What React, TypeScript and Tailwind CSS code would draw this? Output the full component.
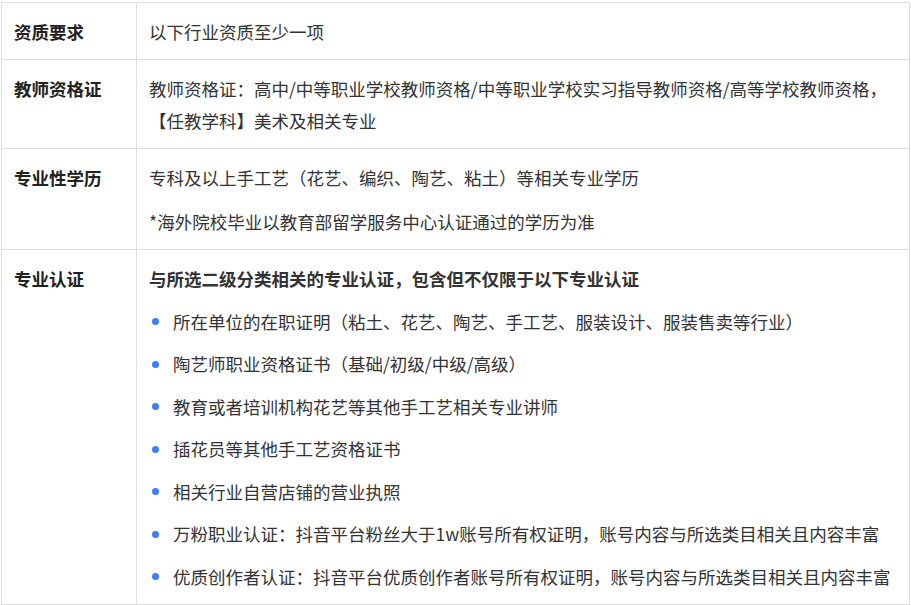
import React from "react";

interface Row {
  label: string;
  content: React.ReactNode;
}

const Dot: React.FC<{ children: React.ReactNode }> = ({ children }) => (
  <div className="flex items-center">
    <span className="w-[24px] shrink-0 pl-[3px] flex items-center">
      <span className="block w-[7px] h-[7px] rounded-full bg-[#3d7eff]" />
    </span>
    <span>{children}</span>
  </div>
);

const rows: Row[] = [
  { label: "资质要求", content: <p>以下行业资质至少一项</p> },
  {
    label: "教师资格证",
    content: (
      <p>
        教师资格证：高中/中等职业学校教师资格/中等职业学校实习指导教师资格/高等学校教师资格，【任教学科】美术及相关专业
      </p>
    ),
  },
  {
    label: "专业性学历",
    content: (
      <div className="flex flex-col gap-[12px]">
        <p>专科及以上手工艺（花艺、编织、陶艺、粘土）等相关专业学历</p>
        <p>*海外院校毕业以教育部留学服务中心认证通过的学历为准</p>
      </div>
    ),
  },
  {
    label: "专业认证",
    content: (
      <div className="flex flex-col gap-[10.5px]">
        <p className="font-bold">
          与所选二级分类相关的专业认证，包含但不仅限于以下专业认证
        </p>
        <Dot>所在单位的在职证明（粘土、花艺、陶艺、手工艺、服装设计、服装售卖等行业）</Dot>
        <Dot>陶艺师职业资格证书（基础/初级/中级/高级）</Dot>
        <Dot>教育或者培训机构花艺等其他手工艺相关专业讲师</Dot>
        <Dot>插花员等其他手工艺资格证书</Dot>
        <Dot>相关行业自营店铺的营业执照</Dot>
        <Dot>万粉职业认证：抖音平台粉丝大于1w账号所有权证明，账号内容与所选类目相关且内容丰富</Dot>
        <Dot>优质创作者认证：抖音平台优质创作者账号所有权证明，账号内容与所选类目相关且内容丰富</Dot>
      </div>
    ),
  },
];

export default function App() {
  return (
    <div
      className="bg-white min-h-[605px] pl-[1px] pt-[2px] text-[#333] text-[17.5px] leading-[32px]"
      style={{ fontFamily: '"Noto Sans CJK SC", "Noto Sans", sans-serif' }}
    >
      <div className="w-[909px] border border-[#dedede]">
        {rows.map((row, i) => (
          <div
            key={row.label}
            className={
              i < rows.length - 1
                ? "flex border-b border-[#dedede]"
                : "flex"
            }
          >
            <div className="w-[135px] shrink-0 border-r border-[#dedede] pl-[12px] pt-[13px] pb-[11px] font-bold text-[#222]">
              {row.label}
            </div>
            <div className="flex-1 min-w-0 pl-[12px] pr-[10px] pt-[13px] pb-[11px]">
              {row.content}
            </div>
          </div>
        ))}
      </div>
    </div>
  );
}
